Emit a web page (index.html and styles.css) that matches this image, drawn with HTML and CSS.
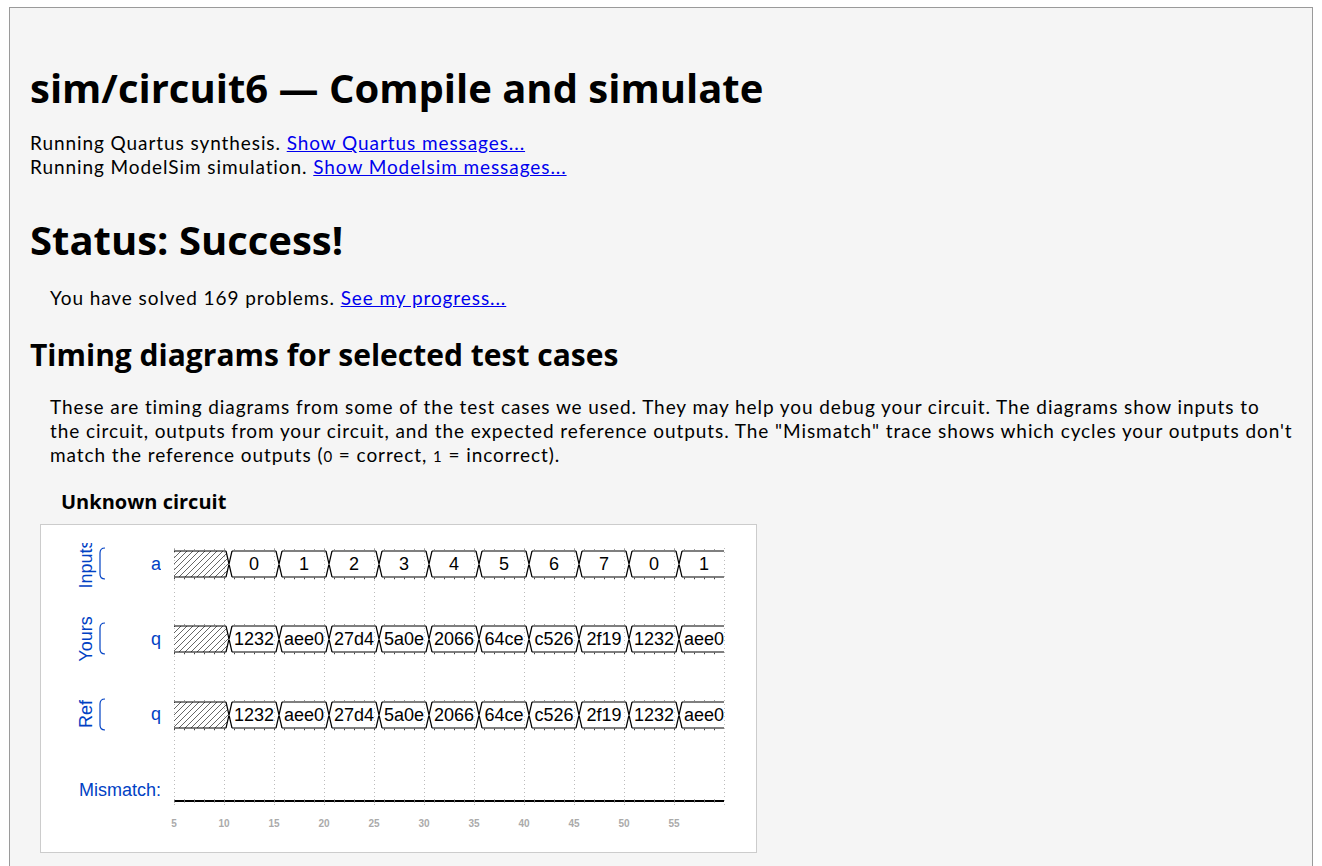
FILE: index.html
```html
<!DOCTYPE html>
<html>
<head>
<meta charset="utf-8">
<title>sim/circuit6 — Compile and simulate</title>
<link rel="stylesheet" href="styles.css">
</head>
<body>
<div class="page">
  <h1 class="title">sim/circuit6 — Compile and simulate</h1>
  <p class="log">Running Quartus synthesis. <a href="#">Show Quartus messages...</a><br>Running ModelSim simulation. <a href="#">Show Modelsim messages...</a></p>

  <h1 class="status">Status: Success!</h1>
  <p class="solved">You have solved 169 problems. <a href="#">See my progress...</a></p>

  <h2 class="section">Timing diagrams for selected test cases</h2>
  <p class="intro">These are timing diagrams from some of the test cases we used. They may help you debug your circuit. The diagrams show inputs to<br>the circuit, outputs from your circuit, and the expected reference outputs. The "Mismatch" trace shows which cycles your outputs don't<br>match the reference outputs (<span class="num">0</span> = correct, <span class="num">1</span> = incorrect).</p>

  <div class="diagram">
    <h3 class="diagram-title">Unknown circuit</h3>
    <div class="wave-box">
      <svg class="wave" width="715" height="327" viewBox="41 525 715 327" xmlns="http://www.w3.org/2000/svg">
        <defs>
          <pattern id="hatch" patternUnits="userSpaceOnUse" width="6" height="6">
            <path d="M-1,1 l2,-2 M0,6 l6,-6 M5,7 l2,-2" stroke="#555" stroke-width="0.9"/>
          </pattern>
          <clipPath id="waveclip"><rect x="170" y="525" width="554" height="327"/></clipPath>
          <clipPath id="labelclip"><rect x="41" y="543" width="120" height="309"/></clipPath>
          <polygon id="hatchpoly" points="174,-13 226,-13 229,0 226,13 174,13" fill="url(#hatch)"/>
          <path id="wave" fill="none" stroke="#000" stroke-width="1.2"
            d="M174,-13H226M232,-13H276M282,-13H326M332,-13H376M382,-13H426M432,-13H476M482,-13H526M532,-13H576M582,-13H626M632,-13H676M682,-13H730
               M174,13H226M232,13H276M282,13H326M332,13H376M382,13H426M432,13H476M482,13H526M532,13H576M582,13H626M632,13H676M682,13H730
               M226,-13L232,13M226,13L232,-13
               M276,-13L282,13M276,13L282,-13
               M326,-13L332,13M326,13L332,-13
               M376,-13L382,13M376,13L382,-13
               M426,-13L432,13M426,13L432,-13
               M476,-13L482,13M476,13L482,-13
               M526,-13L532,13M526,13L532,-13
               M576,-13L582,13M576,13L582,-13
               M626,-13L632,13M626,13L632,-13
               M676,-13L682,13M676,13L682,-13"/>
          <g id="ticks">
            <line x1="174" y1="14.5" x2="724" y2="14.5" stroke="#444" stroke-width="1.5" stroke-dasharray="1 9"/>
            <line x1="174" y1="-14.5" x2="724" y2="-14.5" stroke="#999" stroke-width="1" stroke-dasharray="1 9"/>
          </g>
        </defs>

        <g class="grid" stroke="#bbb" stroke-width="1" stroke-dasharray="1 3">
          <line x1="174.5" y1="548" x2="174.5" y2="808"/>
          <line x1="224.5" y1="548" x2="224.5" y2="808"/>
          <line x1="274.5" y1="548" x2="274.5" y2="808"/>
          <line x1="324.5" y1="548" x2="324.5" y2="808"/>
          <line x1="374.5" y1="548" x2="374.5" y2="808"/>
          <line x1="424.5" y1="548" x2="424.5" y2="808"/>
          <line x1="474.5" y1="548" x2="474.5" y2="808"/>
          <line x1="524.5" y1="548" x2="524.5" y2="808"/>
          <line x1="574.5" y1="548" x2="574.5" y2="808"/>
          <line x1="624.5" y1="548" x2="624.5" y2="808"/>
          <line x1="674.5" y1="548" x2="674.5" y2="808"/>
          <line x1="724.5" y1="548" x2="724.5" y2="808"/>
        </g>

        <g class="groups" clip-path="url(#labelclip)">
          <text class="grp" transform="translate(92,564) rotate(-90)">Inputs</text>
          <text class="grp" transform="translate(92,639) rotate(-90)">Yours</text>
          <text class="grp" transform="translate(92,714) rotate(-90)">Ref</text>
          <path class="bracket" d="M105,548c-3,0 -5,2 -5,5v21c0,3 2,5 5,5"/>
          <path class="bracket" d="M105,623c-3,0 -5,2 -5,5v21c0,3 2,5 5,5"/>
          <path class="bracket" d="M105,699c-3,0 -5,2 -5,5v21c0,3 2,5 5,5"/>
          <text class="sig" x="156" y="564">a</text>
          <text class="sig" x="156" y="639">q</text>
          <text class="sig" x="156" y="714">q</text>
        </g>

        <g clip-path="url(#waveclip)">
          <g transform="translate(0,564)">
            <use href="#hatchpoly"/>
            <use href="#ticks"/>
            <use href="#wave"/>
            <g class="val">
              <text x="254">0</text><text x="304">1</text><text x="354">2</text><text x="404">3</text><text x="454">4</text>
              <text x="504">5</text><text x="554">6</text><text x="604">7</text><text x="654">0</text><text x="704">1</text>
            </g>
          </g>
          <g transform="translate(0,639)">
            <use href="#hatchpoly"/>
            <use href="#ticks"/>
            <use href="#wave"/>
            <g class="val">
              <text x="254">1232</text><text x="304">aee0</text><text x="354">27d4</text><text x="404">5a0e</text><text x="454">2066</text>
              <text x="504">64ce</text><text x="554">c526</text><text x="604">2f19</text><text x="654">1232</text><text x="704">aee0</text>
            </g>
          </g>
          <g transform="translate(0,715)">
            <use href="#hatchpoly"/>
            <use href="#ticks"/>
            <use href="#wave"/>
            <g class="val">
              <text x="254">1232</text><text x="304">aee0</text><text x="354">27d4</text><text x="404">5a0e</text><text x="454">2066</text>
              <text x="504">64ce</text><text x="554">c526</text><text x="604">2f19</text><text x="654">1232</text><text x="704">aee0</text>
            </g>
          </g>
          <line x1="174" y1="801" x2="724" y2="801" stroke="#000" stroke-width="2"/>
          <line x1="174" y1="801" x2="724" y2="801" stroke="#666" stroke-width="3" stroke-dasharray="1 9"/>
        </g>

        <text class="mis" x="161" y="790">Mismatch:</text>

        <g class="axis">
          <text x="174" y="823">5</text><text x="224" y="823">10</text><text x="274" y="823">15</text>
          <text x="324" y="823">20</text><text x="374" y="823">25</text><text x="424" y="823">30</text>
          <text x="474" y="823">35</text><text x="524" y="823">40</text><text x="574" y="823">45</text>
          <text x="624" y="823">50</text><text x="674" y="823">55</text>
        </g>
      </svg>
    </div>
  </div>
</div>
</body>
</html>
```

FILE: styles.css
```css
html, body {
  margin: 0;
  padding: 0;
  background: #ffffff;
}

body {
  font-family: "Lato", "Open Sans", sans-serif;
  color: #000;
}

.page {
  margin: 7px 9px 0 9px;
  border: 1px solid #9a9a9a;
  border-bottom: none;
  background: #f5f5f5;
  padding: 0 20px 40px 20px;
  min-height: 900px;
}

.title,
.status {
  font-family: "Open Sans", "Noto Sans", sans-serif;
  font-weight: 700;
  font-size: 40px;
  line-height: 48px;
  margin: 0;
}

.title {
  padding-top: 56px;
}

.log {
  margin: 19px 0 0 0;
  font-size: 19px;
  line-height: 24px;
  letter-spacing: 0.92px;
}

a {
  color: #0000ee;
  text-decoration: underline;
}

.status {
  margin-top: 37px;
}

.solved {
  margin: 22px 0 0 20px;
  font-size: 19px;
  line-height: 24px;
  letter-spacing: 0.92px;
}

.section {
  font-family: "Open Sans", "Noto Sans", sans-serif;
  font-weight: 700;
  font-size: 30px;
  line-height: 34px;
  margin: 28px 0 0 0;
}

.intro {
  margin: 23px 0 0 20px;
  font-size: 19px;
  line-height: 24px;
  letter-spacing: 0.92px;
  white-space: nowrap;
}

.num {
  font-size: 15px;
}

.diagram {
  margin: 22px 0 0 10px;
}

.diagram-title {
  font-family: "Open Sans", "Noto Sans", sans-serif;
  font-weight: 700;
  font-size: 20px;
  line-height: 24px;
  margin: 0 0 10px 21px;
}

.wave-box {
  width: 715px;
  height: 327px;
  background: #ffffff;
  border: 1px solid #cccccc;
}

.wave {
  display: block;
}

.wave text {
  font-family: "Liberation Sans", Arial, sans-serif;
}

.val text {
  font-size: 18px;
  text-anchor: middle;
  dominant-baseline: central;
  fill: #000;
}

.grp {
  font-size: 18px;
  fill: #0041c4;
  text-anchor: middle;
}

.sig {
  font-size: 18px;
  fill: #0041c4;
  text-anchor: middle;
  dominant-baseline: central;
}

.mis {
  font-size: 18px;
  fill: #0041c4;
  text-anchor: end;
  dominant-baseline: central;
}

.bracket {
  fill: none;
  stroke: #0041c4;
  stroke-width: 1.2;
}

.axis text {
  font-size: 10px;
  font-weight: 700;
  fill: #aaaaaa;
  text-anchor: middle;
  dominant-baseline: central;
}
```
